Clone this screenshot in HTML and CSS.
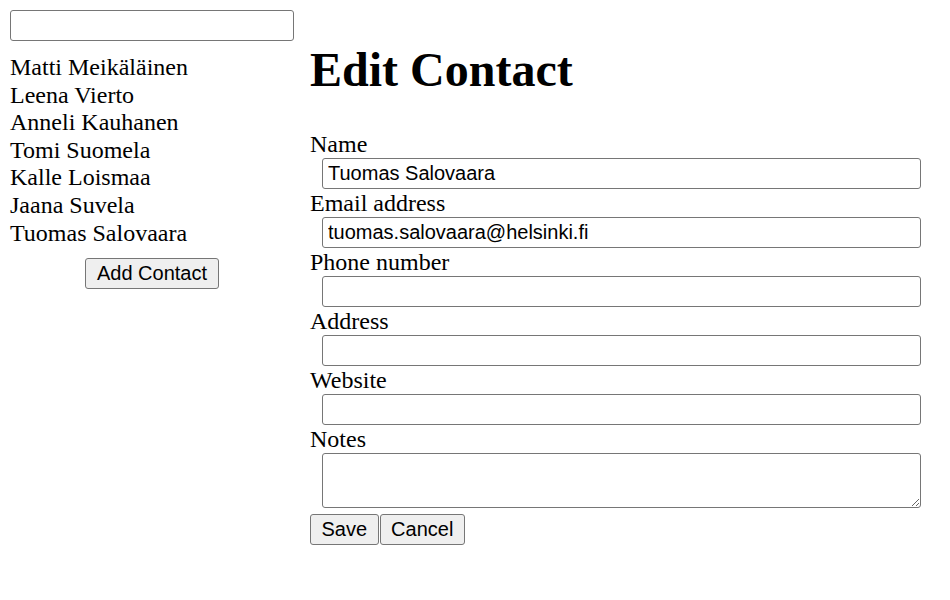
FILE: index.html
```html
<!DOCTYPE html>
<html lang="fi">
<head>
<meta charset="utf-8">
<title>Contacts</title>
<link rel="stylesheet" href="styles.css">
</head>
<body>
<div class="app">
  <aside class="sidebar">
    <input class="search" type="text">
    <ul class="contact-list">
      <li>Matti Meikäläinen</li>
      <li>Leena Vierto</li>
      <li>Anneli Kauhanen</li>
      <li>Tomi Suomela</li>
      <li>Kalle Loismaa</li>
      <li>Jaana Suvela</li>
      <li>Tuomas Salovaara</li>
    </ul>
    <div class="add-wrap"><button class="btn" type="button">Add Contact</button></div>
  </aside>
  <main class="editor">
    <h1 class="title">Edit Contact</h1>
    <form class="form">
      <label class="field-label">Name</label>
      <input class="field" type="text" value="Tuomas Salovaara">
      <label class="field-label">Email address</label>
      <input class="field" type="text" value="tuomas.salovaara@helsinki.fi">
      <label class="field-label">Phone number</label>
      <input class="field" type="text">
      <label class="field-label">Address</label>
      <input class="field" type="text">
      <label class="field-label">Website</label>
      <input class="field" type="text">
      <label class="field-label">Notes</label>
      <textarea class="field notes"></textarea>
      <div class="actions"><button class="btn" type="button">Save</button><button class="btn" type="button">Cancel</button></div>
    </form>
  </main>
</div>
</body>
</html>
```
FILE: styles.css
```css
html, body {
  margin: 0;
  padding: 0;
  background: #fff;
}
body {
  padding: 10px;
  font-family: "Liberation Serif", "Times New Roman", serif;
  font-size: 24px;
  color: #000;
}
.app {
  display: flex;
  gap: 16px;
  align-items: flex-start;
}
.sidebar {
  width: 284px;
  flex: none;
  display: flex;
  flex-direction: column;
}
.search {
  box-sizing: border-box;
  width: 284px;
  height: 31px;
  margin: 0;
  border: 1px solid #767676;
  border-radius: 3px;
  padding: 0 4px;
  font-family: "Liberation Sans", Arial, sans-serif;
  font-size: 20px;
}
.contact-list {
  list-style: none;
  margin: 13px 0 0;
  padding: 0;
  line-height: 27.6px;
}
.add-wrap {
  margin-top: 11px;
  display: flex;
  justify-content: center;
}
.btn {
  box-sizing: border-box;
  height: 31px;
  margin: 0;
  padding: 0 11px;
  border: 1px solid #767676;
  border-radius: 3px;
  background: #efefef;
  color: #000;
  font-family: "Liberation Sans", Arial, sans-serif;
  font-size: 20px;
  line-height: 23px;
}
.actions .btn {
  padding: 0 10.5px;
}
.editor {
  flex: 1;
  min-width: 0;
  padding-right: 19px;
}
.title {
  margin: 32px 0 33px;
  font-size: 48px;
  font-weight: bold;
  line-height: 55px;
}
.form {
  display: flex;
  flex-direction: column;
}
.field-label {
  display: block;
  line-height: 28px;
  height: 28px;
}
.field {
  box-sizing: border-box;
  display: block;
  margin: 0 0 0 12px;
  width: calc(100% - 12px);
  height: 31px;
  border: 1px solid #767676;
  border-radius: 3px;
  padding: 0 5px;
  font-family: "Liberation Sans", Arial, sans-serif;
  font-size: 20px;
  color: #000;
  background: #fff;
}
.notes {
  height: 55px;
  resize: both;
}
.actions {
  margin-top: 6px;
  display: flex;
  gap: 1px;
}
```
